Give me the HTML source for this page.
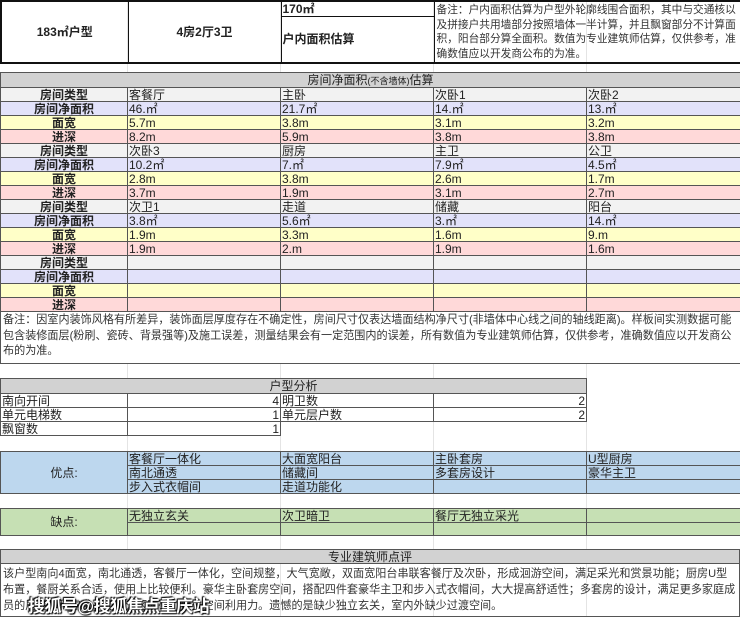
<!DOCTYPE html>
<html><head><meta charset="utf-8"><style>
*{margin:0;padding:0;box-sizing:border-box}
body{width:740px;height:617px;background:#fff;font-family:"Liberation Sans","Noto Sans CJK SC",sans-serif;font-size:12px;color:#222;position:relative;overflow:hidden}
.abs{position:absolute}
table{border-collapse:collapse;table-layout:fixed}
td{border:1px solid #555;padding:0 1px;line-height:12px;white-space:nowrap;overflow:hidden;vertical-align:middle}
.lab{text-align:center;font-weight:bold}
.g{background:#f2f2f2}.p{background:#e2e2fa}.y{background:#ffffc8}.r{background:#ffd9d9}
.hd{background:#d2d2d2;text-align:center}
.b{background:#bdd7ee}.gr{background:#c6e0b4}
.rt{text-align:right}
.grid{border-left:1px solid #e4e4e4;position:absolute;top:0;bottom:0}
</style></head><body>
<div class="grid" style="left:127px;height:617px"></div>
<div class="grid" style="left:280px;height:617px"></div>
<div class="grid" style="left:433px;height:617px"></div>
<div class="grid" style="left:586px;height:617px"></div>

<table class="abs" style="left:0;top:0;width:740px;border:2px solid #111">
<col style="width:127px"><col style="width:153px"><col style="width:153px"><col style="width:307px">
<tr style="height:14px"><td rowspan="2" class="lab" style="border:1.5px solid #111">183㎡户型</td><td rowspan="2" class="lab" style="border:1.5px solid #111">4房2厅3卫</td><td style="font-weight:bold;border:1.5px solid #111">170㎡</td><td rowspan="2" style="white-space:normal;line-height:14.5px;font-size:10.7px;color:#333;border:1.5px solid #111;padding:1px 2px">备注：户内面积估算为户型外轮廓线围合面积，其中与交通核以及拼接户共用墙部分按照墙体一半计算，并且飘窗部分不计算面积，阳台部分算全面积。数值为专业建筑师估算，仅供参考，准确数值应以开发商公布的为准。</td></tr>
<tr style="height:43px"><td style="font-weight:bold;border:1.5px solid #111">户内面积估算</td></tr>
</table>

<table class="abs" style="left:0;top:72px;width:740px">
<col style="width:127px"><col style="width:153px"><col style="width:153px"><col style="width:153px"><col style="width:154px">
<tr style="height:15px"><td colspan="5" class="hd">房间净面积<span style="font-size:9px">(不含墙体)</span>估算</td></tr>
<tr style="height:14px" class="g"><td class="lab">房间类型</td><td>客餐厅</td><td>主卧</td><td>次卧1</td><td>次卧2</td></tr>
<tr style="height:14px" class="p"><td class="lab">房间净面积</td><td>46.㎡</td><td>21.7㎡</td><td>14.㎡</td><td>13.㎡</td></tr>
<tr style="height:14px" class="y"><td class="lab">面宽</td><td>5.7m</td><td>3.8m</td><td>3.1m</td><td>3.2m</td></tr>
<tr style="height:14px" class="r"><td class="lab">进深</td><td>8.2m</td><td>5.9m</td><td>3.8m</td><td>3.8m</td></tr>
<tr style="height:14px" class="g"><td class="lab">房间类型</td><td>次卧3</td><td>厨房</td><td>主卫</td><td>公卫</td></tr>
<tr style="height:14px" class="p"><td class="lab">房间净面积</td><td>10.2㎡</td><td>7.㎡</td><td>7.9㎡</td><td>4.5㎡</td></tr>
<tr style="height:14px" class="y"><td class="lab">面宽</td><td>2.8m</td><td>3.8m</td><td>2.6m</td><td>1.7m</td></tr>
<tr style="height:14px" class="r"><td class="lab">进深</td><td>3.7m</td><td>1.9m</td><td>3.1m</td><td>2.7m</td></tr>
<tr style="height:14px" class="g"><td class="lab">房间类型</td><td>次卫1</td><td>走道</td><td>储藏</td><td>阳台</td></tr>
<tr style="height:14px" class="p"><td class="lab">房间净面积</td><td>3.8㎡</td><td>5.6㎡</td><td>3.㎡</td><td>14.㎡</td></tr>
<tr style="height:14px" class="y"><td class="lab">面宽</td><td>1.9m</td><td>3.3m</td><td>1.6m</td><td>9.m</td></tr>
<tr style="height:14px" class="r"><td class="lab">进深</td><td>1.9m</td><td>2.m</td><td>1.9m</td><td>1.6m</td></tr>
<tr style="height:14px" class="g"><td class="lab">房间类型</td><td></td><td></td><td></td><td></td></tr>
<tr style="height:14px" class="p"><td class="lab">房间净面积</td><td></td><td></td><td></td><td></td></tr>
<tr style="height:14px" class="y"><td class="lab">面宽</td><td></td><td></td><td></td><td></td></tr>
<tr style="height:14px" class="r"><td class="lab">进深</td><td></td><td></td><td></td><td></td></tr>
<tr style="height:52px"><td colspan="5" style="white-space:normal;line-height:15.5px;font-size:11.1px;color:#333;padding:1px 2px;vertical-align:top;background:#fff">备注：因室内装饰风格有所差异，装饰面层厚度存在不确定性，房间尺寸仅表达墙面结构净尺寸(非墙体中心线之间的轴线距离)。样板间实测数据可能包含装修面层(粉刷、瓷砖、背景强等)及施工误差，测量结果会有一定范围内的误差，所有数值为专业建筑师估算，仅供参考，准确数值应以开发商公布的为准。</td></tr>
</table>

<table class="abs" style="left:0;top:378px;width:586px">
<col style="width:127px"><col style="width:153px"><col style="width:153px"><col style="width:153px">
<tr style="height:15px"><td colspan="4" class="hd">户型分析</td></tr>
<tr style="height:14px"><td>南向开间</td><td class="rt">4</td><td>明卫数</td><td class="rt">2</td></tr>
<tr style="height:14px"><td>单元电梯数</td><td class="rt">1</td><td>单元层户数</td><td class="rt">2</td></tr>
<tr style="height:14px"><td>飘窗数</td><td class="rt">1</td><td style="border:none"></td><td style="border:none"></td></tr>
</table>

<table class="abs b" style="left:0;top:451px;width:740px">
<col style="width:127px"><col style="width:153px"><col style="width:153px"><col style="width:153px"><col style="width:154px">
<tr style="height:14px"><td rowspan="3" style="text-align:center">优点:</td><td>客餐厅一体化</td><td>大面宽阳台</td><td>主卧套房</td><td>U型厨房</td></tr>
<tr style="height:14px"><td>南北通透</td><td>储藏间</td><td>多套房设计</td><td>豪华主卫</td></tr>
<tr style="height:14px"><td>步入式衣帽间</td><td>走道功能化</td><td></td><td></td></tr>
</table>

<table class="abs gr" style="left:0;top:508px;width:740px">
<col style="width:127px"><col style="width:153px"><col style="width:153px"><col style="width:153px"><col style="width:154px">
<tr style="height:14px"><td rowspan="2" style="text-align:center">缺点:</td><td>无独立玄关</td><td>次卫暗卫</td><td>餐厅无独立采光</td><td></td></tr>
<tr style="height:13px"><td></td><td></td><td></td><td></td></tr>
</table>

<table class="abs" style="left:0;top:549px;width:740px">
<tr style="height:14px"><td class="hd">专业建筑师点评</td></tr>
<tr style="height:53px"><td style="white-space:normal;line-height:16px;font-size:11.1px;color:#333;padding:2px 2px;vertical-align:top">该户型南向4面宽，南北通透，客餐厅一体化，空间规整，大气宽敞，双面宽阳台串联客餐厅及次卧，形成洄游空间，满足采光和赏景功能；厨房U型布置，餐厨关系合适，使用上比较便利。豪华主卧套房空间，搭配四件套豪华主卫和步入式衣帽间，大大提高舒适性；多套房的设计，满足更多家庭成员的居住隐私需求；功能分区明确，提升空间利用力。遗憾的是缺少独立玄关，室内外缺少过渡空间。</td></tr>
</table>

<div class="abs" style="left:28px;top:592px;font-size:17px;font-weight:bold;color:#fff;text-shadow:0 0 2px #000,1px 1px 1px #000,-1px -1px 1px #000;letter-spacing:-0.5px">搜狐号@搜狐焦点重庆站</div>
</body></html>
